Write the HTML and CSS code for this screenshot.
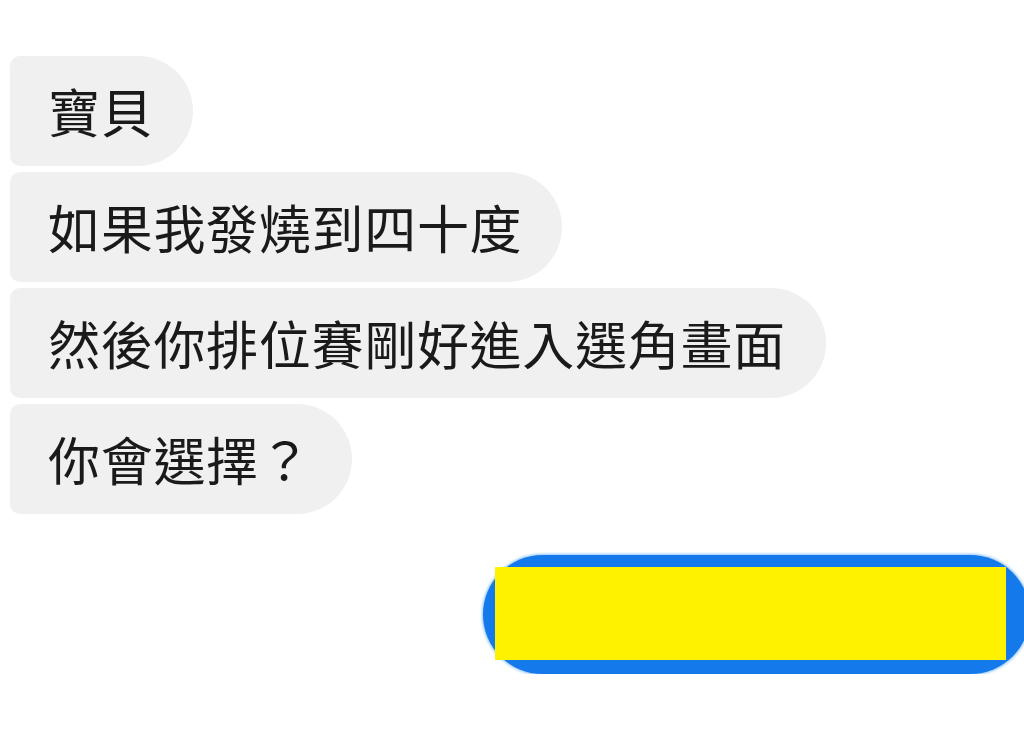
FILE: index.html
```html
<!DOCTYPE html>
<html lang="zh-Hant">
<head>
<meta charset="utf-8">
<title>Chat</title>
<link rel="stylesheet" href="styles.css">
</head>
<body>
<div class="thread">
	<div class="incoming">
		<div class="bubble">寶貝</div>
		<div class="bubble">如果我發燒到四十度</div>
		<div class="bubble">然後你排位賽剛好進入選角畫面</div>
		<div class="bubble">你會選擇？</div>
	</div>
	<div class="outgoing">
		<div class="bubble-out">
			<div class="censor"></div>
		</div>
	</div>
</div>
</body>
</html>
```

FILE: styles.css
```css
html, body {
	margin: 0;
	padding: 0;
	background-color: #ffffff;
	overflow: hidden;
}

.thread {
	display: flex;
	flex-direction: column;
	padding: 56px 0 0 10px;
	font-family: "Noto Sans CJK TC", "Noto Sans", sans-serif;
}

.incoming {
	display: flex;
	flex-direction: column;
	align-items: flex-start;
	gap: 6px;
}

.bubble {
	background-color: #f0f0f0;
	color: #1a1a1a;
	font-size: 52px;
	line-height: 52px;
	letter-spacing: 0.7px;
	padding: 29px 40px 29px 38px;
	border-radius: 10px 56px 56px 10px;
	white-space: nowrap;
}

.outgoing {
	display: flex;
	justify-content: flex-end;
	margin-top: 41px;
	margin-right: -6px;
}

.bubble-out {
	width: 523px;
	height: 93px;
	padding: 12px 12px 14px 12px;
	background-color: #1479ea;
	border-radius: 60px;
	box-shadow: 0 0 3px 1px #8cc2f7;
}

.censor {
	width: 511px;
	height: 93px;
	background-color: #fff200;
}
```
